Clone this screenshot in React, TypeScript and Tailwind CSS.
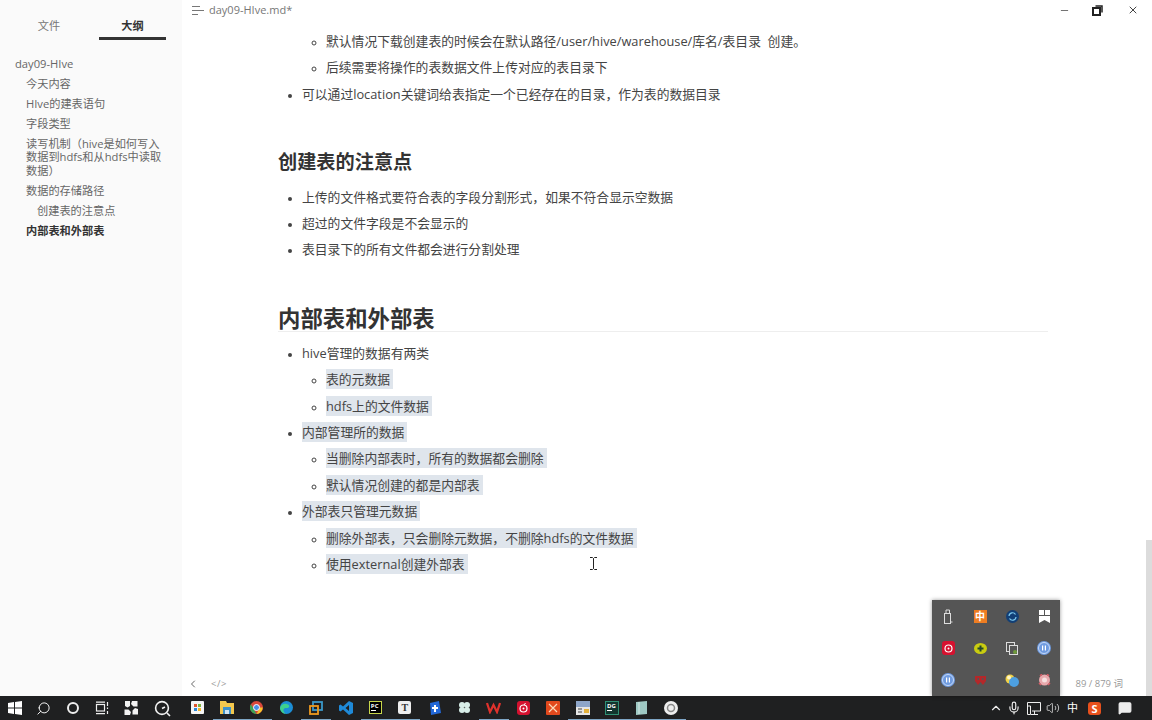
import React from "react";
import { ChevronLeft, ChevronUp, Mic, Volume2, MessageSquareText, Search, Minus, X } from "lucide-react";

const font = "[font-family:'Open_Sans','Noto_Sans_CJK_SC',sans-serif]";

const outline = [
  { text: "day09-HIve", cls: "pl-[15px]" },
  { text: "今天内容", cls: "pl-[26px]" },
  { text: "HIve的建表语句", cls: "pl-[26px]" },
  { text: "字段类型", cls: "pl-[26px]" },
  { text: "读写机制（hive是如何写入数据到hdfs和从hdfs中读取数据）", cls: "pl-[26px] pr-[20px]" },
  { text: "数据的存储路径", cls: "pl-[26px]" },
  { text: "创建表的注意点", cls: "pl-[37px]" },
  { text: "内部表和外部表", cls: "pl-[26px] font-bold text-[#333]" },
];

function Mark({ children }: { children: React.ReactNode }) {
  return <span className="bg-[#dfe5ec] py-[1px] pr-[3px]">{children}</span>;
}

function Row({ children }: { children: React.ReactNode }) {
  return <div className="h-[26.4px] leading-[26.4px]">{children}</div>;
}

const Win = () => (
  <svg width="14" height="14" viewBox="0 0 14 14" fill="#fff">
    <path d="M0 2 6 1.1V6.6H0ZM7 1 14 0V6.6H7ZM0 7.4H6V12.9L0 12ZM7 7.4H14V14L7 13Z" />
  </svg>
);

const Pinwheel = () => (
  <svg width="14" height="14" viewBox="0 0 14 14" fill="#f2f2f2">
    <path d="M1 0H6V5L3.500 6.500 1 5ZM8 0H13.500V5.500H9.500L7 3ZM14 8V13.500H8.500V9.500L11 7ZM6 14H.5V8.500H4.500L7 11Z" />
  </svg>
);

const SearchCircle = () => (
  <svg width="17" height="17" viewBox="0 0 17 17" fill="none" stroke="#f2f2f2" strokeWidth="1.6">
    <circle cx="8" cy="8" r="6.4" />
    <path d="M8 8.5 11 7M13 13l3 3" />
  </svg>
);

const TaskView = () => (
  <svg width="14" height="14" viewBox="0 0 14 14" fill="none" stroke="#eee" strokeWidth="1.2">
    <rect x="1.5" y="3.5" width="8" height="6.5" />
    <path d="M1 1.2H10M1 12.6H10M12.5 1V5M12.5 6.5V8M12.5 10V13" />
  </svg>
);

const apps: { icon: React.ReactNode; on?: boolean }[] = [
  {
    icon: (
      <svg width="13" height="13" viewBox="0 0 13 13">
        <rect width="13" height="13" rx="1" fill="#f4f4f4" />
        <rect x="3" y="3" width="3" height="3" fill="#e0562c" />
        <rect x="7" y="3" width="3" height="3" fill="#7fb33c" />
        <rect x="3" y="7" width="3" height="3" fill="#2c86d6" />
        <rect x="7" y="7" width="3" height="3" fill="#f0b429" />
      </svg>
    ),
  },
  {
    on: true,
    icon: (
      <svg width="14" height="13" viewBox="0 0 14 13">
        <path d="M0 0H6L7 2H14V13H0Z" fill="#f3c84e" />
        <rect x="3" y="6" width="8" height="7" fill="#3f92c9" />
        <rect x="5" y="9" width="4" height="4" fill="#cfe5f2" />
      </svg>
    ),
  },
  {
    on: true,
    icon: (
      <svg width="13" height="13" viewBox="0 0 13 13">
        <circle cx="6.5" cy="6.5" r="6.5" fill="#d9483b" />
        <path d="M6.5 13A6.5 6.5 0 0 1 .9 3.2L4 8.5 6.5 13Z" fill="#3aa757" />
        <path d="M6.5 13 10 6.5H12.7A6.5 6.5 0 0 1 6.5 13Z" fill="#f7c52b" />
        <circle cx="6.5" cy="6.5" r="3" fill="#4a8fe7" stroke="#fff" strokeWidth="1" />
      </svg>
    ),
  },
  {
    icon: (
      <svg width="13" height="13" viewBox="0 0 13 13">
        <circle cx="6.5" cy="6.5" r="6.5" fill="#1c8ed6" />
        <path d="M0 7C1 3 5 2 8 3.5 10 4.6 9.5 7 7 7 5 7 3 7.5 3.5 10 4 12 6 13 6.5 13 3 13 0 10 0 7Z" fill="#3ed08e" />
      </svg>
    ),
  },
  {
    on: true,
    icon: (
      <svg width="14" height="14" viewBox="0 0 14 14" fill="none" strokeWidth="1.8">
        <rect x="4" y="1" width="9" height="8" stroke="#3a98c9" />
        <rect x="1" y="5" width="8" height="8" stroke="#ef9a1f" />
      </svg>
    ),
  },
  {
    icon: (
      <svg width="14" height="14" viewBox="0 0 14 14" fill="#1f8ad8">
        <path d="M10 0 14 2V12L10 14 4 8.5 1.500 10.500 0 9.500V4.500L1.500 3.500 4 5.500ZM10 4 6.500 7 10 10Z" />
      </svg>
    ),
  },
  {
    on: true,
    icon: (
      <div className="w-[13px] h-[13px] bg-black border border-[#c9d64a] flex flex-col pl-[1px] text-[6px] leading-[8px] font-bold text-white">
        PC
        <div className="w-[5px] h-[1px] bg-white" />
      </div>
    ),
  },
  {
    on: true,
    icon: (
      <div className="w-[13px] h-[13px] bg-[#eee] rounded-[2px] flex items-center justify-center text-[10px] leading-none font-bold text-[#333] [font-family:'Liberation_Serif',serif]">
        T
      </div>
    ),
  },
  {
    icon: (
      <svg width="13" height="14" viewBox="0 0 13 14">
        <path d="M2 2 11 0 13 12 3 14Z" fill="#2368d8" />
        <path d="M6 4H8V6H10V8H8V11H6V8H4V6H6Z" fill="#fff" />
      </svg>
    ),
  },
  {
    icon: (
      <svg width="13" height="13" viewBox="0 0 13 13" fill="#d8eee8">
        <circle cx="4" cy="4" r="3" />
        <circle cx="9" cy="4" r="3" />
        <circle cx="4" cy="9" r="3" />
        <circle cx="9" cy="9" r="3" />
      </svg>
    ),
  },
  {
    on: true,
    icon: (
      <svg width="15" height="12" viewBox="0 0 15 12" fill="none" stroke="#e0322c" strokeWidth="2.200">
        <path d="M1 1 4 10 7.500 3 11 10 14 1" />
      </svg>
    ),
  },
  {
    icon: (
      <svg width="13" height="14" viewBox="0 0 13 14" fill="none">
        <rect width="13" height="14" rx="3" fill="#d5112f" />
        <circle cx="6.500" cy="7.500" r="3.500" stroke="#fff" strokeWidth="1.200" />
        <circle cx="6.500" cy="7.500" r="1" fill="#fff" />
        <path d="M7 4 8.500 2" stroke="#fff" />
      </svg>
    ),
  },
  {
    icon: (
      <svg width="14" height="14" viewBox="0 0 14 14">
        <rect width="14" height="14" rx="1" fill="#e2491d" />
        <path d="M3 3 11 11M11 3 3 11" stroke="#fbd9b8" strokeWidth="1.200" />
      </svg>
    ),
  },
  {
    on: true,
    icon: (
      <svg width="14" height="14" viewBox="0 0 14 14">
        <rect width="14" height="6" fill="#8ea6c9" />
        <rect y="6" width="14" height="8" fill="#e6e6e6" />
        <rect x="8" y="8" width="5" height="4" fill="#e2b13c" />
        <path d="M2 8H6M2 11H6" stroke="#444" />
      </svg>
    ),
  },
  {
    on: true,
    icon: (
      <div className="w-[14px] h-[14px] bg-[#12352e] border border-[#2f8f74] flex flex-col pl-[1px] text-[6px] leading-[8px] font-bold text-white">
        DG
        <div className="w-[5px] h-[1px] bg-white" />
      </div>
    ),
  },
  {
    on: true,
    icon: (
      <svg width="13" height="14" viewBox="0 0 13 14">
        <path d="M1 1 12 0V13L1 14Z" fill="#9fc9c4" />
        <path d="M4 1V13" stroke="#d5e8e4" />
      </svg>
    ),
  },
  {
    on: true,
    icon: (
      <svg width="14" height="14" viewBox="0 0 14 14" fill="none">
        <circle cx="7" cy="7" r="7" fill="#eee" />
        <circle cx="7" cy="7" r="3.500" stroke="#888" strokeWidth="1.500" />
      </svg>
    ),
  },
];

const tray: React.ReactNode[] = [
  <svg width="10" height="15" viewBox="0 0 10 15" fill="none" stroke="#ddd">
    <rect x="1.500" y="4.500" width="6" height="10" />
    <path d="M3 4V1H6.500V4M8 13H9.500" />
  </svg>,
  <div className="w-[13px] h-[13px] bg-[#ee7d22] flex items-center justify-center text-[10px] leading-none font-bold text-white">中</div>,
  <svg width="13" height="13" viewBox="0 0 13 13" fill="none">
    <circle cx="6.500" cy="6.500" r="6.500" fill="#123f76" />
    <path d="M3 6A3.500 3.500 0 0 1 9.500 4.500M10 7A3.500 3.500 0 0 1 3.500 8.500" stroke="#7cc8ee" strokeWidth="1.200" />
  </svg>,
  <svg width="11" height="13" viewBox="0 0 11 13" fill="#fff">
    <path d="M0 0H5V5H0ZM6 0H11V5H6ZM0 6H11V13L5.500 10 0 13Z" />
  </svg>,
  <svg width="13" height="14" viewBox="0 0 13 14" fill="none">
    <rect width="13" height="14" rx="3" fill="#d5112f" />
    <circle cx="6.500" cy="7.500" r="3.500" stroke="#fff" strokeWidth="1.200" />
    <circle cx="6.500" cy="7.500" r="1" fill="#fff" />
  </svg>,
  <svg width="13" height="11" viewBox="0 0 13 11">
    <ellipse cx="6.500" cy="5.500" rx="6.500" ry="5.500" fill="#c9cc10" />
    <path d="M5.500 2.500H7.500V4.500H9.500V6.500H7.500V8.500H5.500V6.500H3.500V4.500H5.500Z" fill="#24492a" />
  </svg>,
  <svg width="13" height="13" viewBox="0 0 13 13" fill="none" stroke="#ddd">
    <rect x=".5" y=".5" width="8" height="9" />
    <rect x="3.500" y="3.500" width="8" height="9" fill="#555" />
    <circle cx="9" cy="10" r="2" fill="#6e9a3c" stroke="none" />
  </svg>,
  <svg width="14" height="14" viewBox="0 0 14 14">
    <circle cx="7" cy="7" r="7" fill="#6f9be0" />
    <circle cx="7" cy="7" r="5.500" fill="none" stroke="#dce8fb" strokeWidth=".8" />
    <path d="M5 4.500H6.200V9.500H5ZM7.800 4.500H9V9.500H7.800Z" fill="#fff" />
  </svg>,
  <svg width="14" height="14" viewBox="0 0 14 14">
    <circle cx="7" cy="7" r="7" fill="#6f9be0" />
    <circle cx="7" cy="7" r="5.500" fill="none" stroke="#dce8fb" strokeWidth=".8" />
    <path d="M5 4.500H6.200V9.500H5ZM7.800 4.500H9V9.500H7.800Z" fill="#fff" />
  </svg>,
  <svg width="11" height="9" viewBox="0 0 11 9" fill="#b3282a">
    <path d="M0 0H11V5L8 9 5.500 6 3 9 0 5ZM2.500 2V4H4V2ZM7 2V4H8.500V2Z" />
  </svg>,
  <svg width="14" height="13" viewBox="0 0 14 13">
    <circle cx="5" cy="5" r="4.500" fill="#f1d247" />
    <circle cx="9" cy="8" r="5" fill="#4d9fe0" />
    <circle cx="4" cy="3.500" r="2" fill="#fff6c8" />
  </svg>,
  <svg width="13" height="12" viewBox="0 0 13 12">
    <circle cx="6.500" cy="6" r="5.500" fill="#e9a9ad" />
    <circle cx="6.500" cy="6" r="2.500" fill="#f6e0e0" />
    <path d="M2 2 4 0M11 2 9 0M1 9 3 11M12 9 10 11" stroke="#d95c66" strokeWidth="1.500" />
  </svg>,
];

export default function App() {
  return (
    <div className={`${font} w-[1152px] h-[720px] overflow-hidden flex flex-col relative bg-white`}>
      <div className="flex-1 flex min-h-0">
        {/* sidebar */}
        <div className="w-[182px] shrink-0 bg-[#fafafa] flex flex-col">
          <div className="flex h-[40px] pl-[16px] gap-[17px] text-[11.2px]">
            <div className="w-[66px] pt-[17px] text-center leading-[18px] text-[#777]">文件</div>
            <div className="w-[67px] pt-[17px] text-center leading-[18px] font-bold text-[#333] border-b-[3px] border-[#333]">大纲</div>
          </div>
          <div className="pt-[13.500px] text-[11.2px] leading-[13.600px] text-[#666]">
            {outline.map((o) => (
              <div key={o.text} className={`py-[3.200px] ${o.cls}`}>
                {o.text}
              </div>
            ))}
          </div>
          <div className="flex-1" />
        </div>

        {/* editor */}
        <div className="flex-1 flex flex-col min-w-0 relative">
          <div className="h-[20px] shrink-0 flex items-center pl-[10px] text-[11px] text-[#777]">
            <svg width="12" height="9" viewBox="0 0 12 9" stroke="#777" fill="none">
              <path d="M0 .5H8M0 4.500H12M0 8.500H6" />
            </svg>
            <span className="ml-[5px]">day09-HIve.md*</span>
            <div className="ml-auto flex items-center">
              <Minus size={11} className="text-[#666] mr-[22px]" />
              <svg width="11" height="11" viewBox="0 0 11 11" fill="none" stroke="#222" strokeWidth="2" className="mr-[24px]">
                <rect x="1" y="3" width="7" height="7" />
                <path d="M3.500 1H10V7.500" strokeWidth="1.500" />
              </svg>
              <X size={12} className="text-[#444] mr-[13px]" />
            </div>
          </div>

          <div className="flex-1 flex min-h-0">
            <div className="flex-1 pl-[96px] pr-[98px] pt-[8px] text-[12.8px] text-[#444] overflow-hidden marker:text-[10.500px]">
              <ul className="list-disc pl-[24px]">
                <ul className="list-[circle] pl-[24px]">
                  <li><Row>默认情况下载创建表的时候会在默认路径/user/hive/warehouse/库名/表目录&nbsp;&nbsp;创建。</Row></li>
                  <li><Row>后续需要将操作的表数据文件上传对应的表目录下</Row></li>
                </ul>
                <li><Row>可以通过location关键词给表指定一个已经存在的目录，作为表的数据目录</Row></li>
              </ul>

              <h2 className="mt-[37.500px] mb-[5px] h-[34px] leading-[33px] text-[19.200px] font-bold text-[#333]">创建表的注意点</h2>
              <ul className="list-disc pl-[24px]">
                <li><Row>上传的文件格式要符合表的字段分割形式，如果不符合显示空数据</Row></li>
                <li><Row>超过的文件字段是不会显示的</Row></li>
                <li><Row>表目录下的所有文件都会进行分割处理</Row></li>
              </ul>

              <h1 className="mt-[39px] mb-[8px] h-[30px] leading-[34px] text-[22.400px] font-bold text-[#333] border-b border-[#eeeeee]">内部表和外部表</h1>
              <ul className="list-disc pl-[24px]">
                <li><Row>hive管理的数据有两类</Row></li>
                <ul className="list-[circle] pl-[24px]">
                  <li><Row><Mark>表的元数据</Mark></Row></li>
                  <li><Row><Mark>hdfs上的文件数据</Mark></Row></li>
                </ul>
                <li><Row><Mark>内部管理所的数据</Mark></Row></li>
                <ul className="list-[circle] pl-[24px]">
                  <li><Row><Mark>当删除内部表时，所有的数据都会删除</Mark></Row></li>
                  <li><Row><Mark>默认情况创建的都是内部表</Mark></Row></li>
                </ul>
                <li><Row><Mark>外部表只管理元数据</Mark></Row></li>
                <ul className="list-[circle] pl-[24px]">
                  <li><Row><Mark>删除外部表，只会删除元数据，不删除hdfs的文件数据</Mark></Row></li>
                  <li><Row><Mark>使用external创建外部表</Mark></Row></li>
                </ul>
              </ul>
            </div>
            {/* scrollbar */}
            <div className="w-[6px] shrink-0 flex flex-col justify-end">
              <div className="h-[156px] bg-[#dcdcdc]" />
            </div>
          </div>

          <div className="absolute left-[0px] right-[6px] bottom-0 h-[24px] flex items-center pl-[5px] pr-[23px] text-[#888]">
            <ChevronLeft size={12} strokeWidth={2} className="text-[#666]" />
            <span className="ml-[12px] text-[9.500px] tracking-[0.5px] leading-none text-[#999]">&lt;/&gt;</span>
            <span className="ml-auto text-[9.500px] text-[#999]">89 / 879 词</span>
          </div>
        </div>
      </div>

      {/* taskbar */}
      <div className="h-[24px] shrink-0 bg-[#1f2021] flex items-center text-white">
        <div className="w-[29px] flex justify-center"><Win /></div>
        <div className="w-[29px] flex justify-center"><Search size={15} strokeWidth={1.500} className="-scale-x-100" /></div>
        <div className="w-[29px] flex justify-center">
          <div className="w-[12px] h-[12px] rounded-full border-2 border-[#eee]" />
        </div>
        <div className="w-[29px] flex justify-center"><TaskView /></div>
        <div className="w-[30px] flex justify-center"><Pinwheel /></div>
        <div className="w-[33px] flex justify-center"><SearchCircle /></div>
        <div className="w-[4px]" />
        {apps.map((a, i) => (
          <div
            key={i}
            className={`w-[29.600px] h-full flex items-center justify-center border-b ${a.on ? "border-[#7ea6c6]" : "border-transparent"}`}
          >
            {a.icon}
          </div>
        ))}
        <div className="ml-auto flex items-center">
          <ChevronUp size={14} className="text-[#eee] mr-[4px]" />
          <Mic size={14} className="text-[#eee] mr-[6px]" />
          <svg width="14" height="13" viewBox="0 0 14 13" fill="none" stroke="#eee" className="mr-[5px]">
            <path d="M.5 9V.5H13.500V9H5M7.500 9V12M4 12.500H11M.5 4H3.500V12.500H.5Z" />
          </svg>
          <Volume2 size={14} strokeWidth={1.300} className="text-[#eee] mr-[7px]" />
          <span className="text-[11px] mr-[10px]">中</span>
          <div className="w-[13px] h-[13px] bg-[#e8501c] rounded-[3px] flex items-center justify-center text-[11px] leading-none font-bold text-white mr-[17px]">S</div>
          <MessageSquareText size={14} className="text-[#1f2021] fill-[#eee] stroke-[#eee] mr-[20px]" />
        </div>
      </div>

      {/* tray overflow popup */}
      <div className="absolute left-[932px] bottom-[24px] w-[128px] h-[96px] bg-[#555555] shadow-[0_0_4px_rgba(0,0,0,0.4)] grid grid-cols-4 grid-rows-3">
        {tray.map((t, i) => (
          <div key={i} className="flex items-center justify-center">{t}</div>
        ))}
      </div>

      {/* text cursor */}
      <svg width="7" height="13" viewBox="0 0 7 13" fill="none" stroke="#222" className="absolute left-[590px] top-[557px]">
        <path d="M0 .5H2.500L3.500 1.500 4.500 .5H7M3.500 1.500V11.500M0 12.500H2.500L3.500 11.500 4.500 12.500H7" />
      </svg>
    </div>
  );
}
